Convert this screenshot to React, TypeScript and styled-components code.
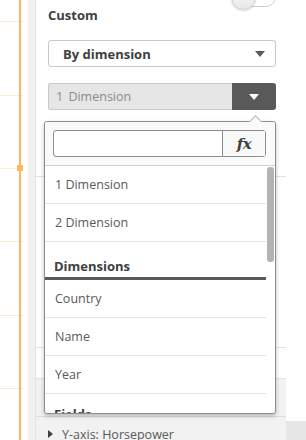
import styled, { createGlobalStyle } from "styled-components";

const Global = createGlobalStyle`
  html, body { margin: 0; padding: 0; background: #fff; }
  body { font-family: "Open Sans", "Liberation Sans", sans-serif; }
  * { box-sizing: border-box; }
`;

const Page = styled.div`
  display: flex;
  width: 306px;
  height: 440px;
  overflow: hidden;
  background: #fff;
`;

const Chart = styled.div`
  width: 28px;
  flex: none;
`;

const Gutter = styled.div`
  width: 8px;
  flex: none;
  background: #f0f0f0;
  border-right: 1px solid #e3e3e3;
`;

const Panel = styled.div`
  position: relative;
  width: 250px;
  flex: none;
  display: flex;
  flex-direction: column;
  background: #fff;
`;

const Aside = styled.div`
  flex: 1;
  display: flex;
  flex-direction: column;
`;

const AsideTop = styled.div`
  height: 421px;
  background: #fff;
`;

const AsideBottom = styled.div`
  flex: 1;
  background: #e6e6e6;
`;

const Section = styled.div<{ $h: number; $grey?: boolean }>`
  height: ${(p) => p.$h}px;
  flex: none;
  border-bottom: 1px solid ${(p) => (p.$grey ? "#dcdcdc" : "#e3e3e3")};
  background: ${(p) => (p.$grey ? "#f2f2f2" : "#fff")};
`;

const Settings = styled(Section)`
  display: flex;
  flex-direction: column;
  padding: 0 10px 0 12px;
`;

const HeaderRow = styled.div`
  display: flex;
  justify-content: space-between;
  align-items: flex-start;
  height: 40px;
`;

const Title = styled.div`
  font-size: 13px;
  font-weight: 700;
  color: #404040;
  margin-top: 6px;
`;

const Toggle = styled.div`
  position: relative;
  width: 44px;
  height: 20px;
  margin-top: -13px;
  border: 1px solid #d0d0d0;
  border-radius: 10px;
  background: #fff;
`;

const Knob = styled.div`
  position: absolute;
  left: -2px;
  top: -3px;
  width: 25px;
  height: 25px;
  border-radius: 50%;
  background: linear-gradient(#fafafa, #e8e8e8);
  border: 1px solid #cfcfcf;
  box-shadow: 0 1px 2px rgba(0, 0, 0, 0.15);
`;

const Select = styled.div`
  display: flex;
  align-items: center;
  justify-content: space-between;
  height: 27px;
  padding: 0 10px 0 14px;
  border: 1px solid #c8c8c8;
  border-radius: 3px;
  font-size: 13px;
  font-weight: 700;
  color: #404040;
`;

const Caret = styled.span<{ $light?: boolean }>`
  width: 0;
  height: 0;
  border-left: 5px solid transparent;
  border-right: 5px solid transparent;
  border-top: 6px solid ${(p) => (p.$light ? "#fff" : "#595959")};
`;

const Combo = styled.div`
  display: flex;
  height: 27px;
  margin-top: 16px;
`;

const ComboField = styled.div`
  flex: 1;
  display: flex;
  align-items: center;
  padding-left: 7px;
  background: #e6e6e6;
  border: 1px solid #c8c8c8;
  border-right: none;
  border-radius: 3px 0 0 3px;
  font-size: 12.5px;
  color: #8a8a8a;
  word-spacing: 2px;
`;

const ComboButton = styled.div`
  width: 44px;
  display: flex;
  align-items: center;
  justify-content: center;
  background: #595959;
  border-radius: 0 3px 3px 0;
`;

const Popover = styled.div`
  position: absolute;
  left: 8px;
  top: 121px;
  width: 232px;
  height: 293px;
  background: #fff;
  border: 1px solid #8c8c8c;
  border-radius: 3px;
  box-shadow: 0 2px 4px rgba(0, 0, 0, 0.25);
  display: flex;
  flex-direction: column;
`;

const Arrow = styled.div`
  position: absolute;
  top: -5px;
  left: 206px;
  width: 9px;
  height: 9px;
  background: #fafafa;
  border-left: 1px solid #b0b0b0;
  border-top: 1px solid #b0b0b0;
  transform: rotate(45deg);
`;

const SearchBar = styled.div`
  height: 44px;
  flex: none;
  padding: 8px 9px 0 8px;
  background: #fafafa;
  border-bottom: 1px solid #d0d0d0;
  border-radius: 3px 3px 0 0;
`;

const SearchBox = styled.div`
  display: flex;
  height: 27px;
  border: 1px solid #8c8c8c;
  border-radius: 3px;
  background: #fff;
`;

const SearchInput = styled.div`
  flex: 1;
`;

const FxButton = styled.div`
  width: 43px;
  display: flex;
  align-items: center;
  justify-content: center;
  border-left: 1px solid #8c8c8c;
  background: #f9f9f9;
  font-family: "DejaVu Serif", "Liberation Serif", serif;
  font-style: italic;
  font-weight: 700;
  font-size: 15px;
  color: #404040;
  letter-spacing: -0.5px;
`;

const ListWrap = styled.div`
  flex: 1;
  display: flex;
  overflow: hidden;
`;

const List = styled.div`
  flex: 1;
  display: flex;
  flex-direction: column;
`;

const Item = styled.div`
  height: 38px;
  flex: none;
  display: flex;
  align-items: center;
  padding-left: 10px;
  border-bottom: 1px solid #e3e3e3;
  font-size: 12.5px;
  color: #595959;
`;

const Group = styled.div<{ $line?: boolean }>`
  height: 38px;
  flex: none;
  display: flex;
  align-items: ${(p) => (p.$line ? "flex-end" : "flex-start")};
  padding: ${(p) => (p.$line ? "0 0 2px 9px" : "11px 0 0 9px")};
  border-bottom: ${(p) => (p.$line ? "3px solid #595959" : "none")};
  font-size: 13px;
  font-weight: 700;
  color: #404040;
`;

const ScrollTrack = styled.div`
  width: 9px;
  flex: none;
  padding: 1px 1px 0 1px;
`;

const Thumb = styled.div`
  height: 95px;
  border-radius: 3px;
  background: #b3b3b3;
`;

const AxisRow = styled.div`
  height: 34px;
  flex: none;
  display: flex;
  align-items: center;
  gap: 9px;
  padding-left: 12px;
  background: #f2f2f2;
  font-size: 12.5px;
  color: #595959;
`;

const Expand = styled.span`
  width: 0;
  height: 0;
  border-top: 4px solid transparent;
  border-bottom: 4px solid transparent;
  border-left: 5px solid #404040;
`;

const gridLines = [21, 95, 168, 241, 315, 388];

export default function App() {
  return (
    <>
      <Global />
      <Page>
        <Chart>
          <svg width="28" height="440">
            {gridLines.map((y) => (
              <line key={y} x1="0" x2="23" y1={y + 0.5} y2={y + 0.5} stroke="#fde8d0" />
            ))}
            <rect x="19" y="0" width="2" height="440" fill="#ffb65e" />
            <rect x="17" y="165" width="6" height="6" fill="#ffb65e" />
          </svg>
        </Chart>
        <Gutter />
        <Panel>
          <Settings $h={177}>
            <HeaderRow>
              <Title>Custom</Title>
              <Toggle>
                <Knob />
              </Toggle>
            </HeaderRow>
            <Select>
              By dimension
              <Caret />
            </Select>
            <Combo>
              <ComboField>1 Dimension</ComboField>
              <ComboButton>
                <Caret $light />
              </ComboButton>
            </Combo>
          </Settings>
          <Section $h={171} />
          <Section $h={31} />
          <Section $h={38} $grey />
          <AxisRow>
            <Expand />
            Y-axis: Horsepower
          </AxisRow>

          <Popover>
            <Arrow />
            <SearchBar>
              <SearchBox>
                <SearchInput />
                <FxButton>fx</FxButton>
              </SearchBox>
            </SearchBar>
            <ListWrap>
              <List>
                <Item>1 Dimension</Item>
                <Item>2 Dimension</Item>
                <Group $line>Dimensions</Group>
                <Item>Country</Item>
                <Item>Name</Item>
                <Item>Year</Item>
                <Group>Fields</Group>
              </List>
              <ScrollTrack>
                <Thumb />
              </ScrollTrack>
            </ListWrap>
          </Popover>
        </Panel>
        <Aside>
          <AsideTop />
          <AsideBottom />
        </Aside>
      </Page>
    </>
  );
}
